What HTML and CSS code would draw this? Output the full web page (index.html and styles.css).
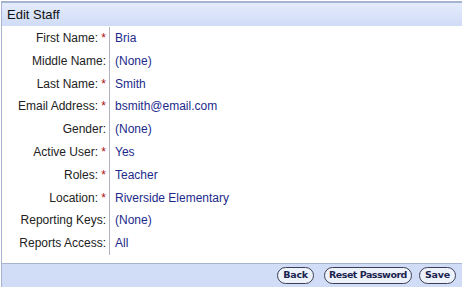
FILE: index.html
```html
<!DOCTYPE html>
<html lang="en">
  <head>
    <meta charset="UTF-8" />
    <title>Edit Staff</title>
    <link rel="stylesheet" href="styles.css">
  </head>
  <body>
    <div class="panel">
      <div class="panel-title">Edit Staff</div>

      <div class="form-body">
        <div class="labels">
          <div class="label">First Name: <span class="req">*</span></div>
          <div class="label">Middle Name:</div>
          <div class="label">Last Name: <span class="req">*</span></div>
          <div class="label">Email Address: <span class="req">*</span></div>
          <div class="label">Gender:</div>
          <div class="label">Active User: <span class="req">*</span></div>
          <div class="label">Roles: <span class="req">*</span></div>
          <div class="label">Location: <span class="req">*</span></div>
          <div class="label">Reporting Keys:</div>
          <div class="label">Reports Access:</div>
        </div>
        <div class="values">
          <div class="value">Bria</div>
          <div class="value">(None)</div>
          <div class="value">Smith</div>
          <div class="value">bsmith@email.com</div>
          <div class="value">(None)</div>
          <div class="value">Yes</div>
          <div class="value">Teacher</div>
          <div class="value">Riverside Elementary</div>
          <div class="value">(None)</div>
          <div class="value">All</div>
        </div>
      </div>

      <div class="panel-footer">
        <button class="btn">Back</button>
        <button class="btn btn-wide">Reset Password</button>
        <button class="btn">Save</button>
      </div>
    </div>
  </body>
</html>
```

FILE: styles.css
```css
body {
  margin: 0;
  font-family: "Liberation Sans", Arial, sans-serif;
  font-size: 12px;
  background: #fff;
  overflow: hidden;
}
.panel {
  margin: 1px 0 0 1px;
  border-top: 2px solid #a7b4cf;
  border-left: 1px solid #a7b4cf;
  height: 284px;
  display: flex;
  flex-direction: column;
}
.panel-title {
  height: 24px;
  line-height: 23px;
  padding-left: 5px;
  font-size: 13px;
  color: #111;
  background: linear-gradient(#e4ecfc, #d0dcf6);
}
.form-body {
  display: flex;
  flex: 1;
  padding-top: 1px;
}
.labels {
  width: 107px;
  border-right: 1px solid #aeb3bd;
  margin-bottom: 8px;
}
.label,
.value {
  height: 22.8px;
  line-height: 22.8px;
  white-space: nowrap;
}
.label {
  text-align: right;
  padding-right: 3px;
  color: #222;
}
.req {
  color: #a11;
}
.values {
  padding-left: 5px;
}
.value {
  color: #1c2a8c;
}
.panel-footer {
  height: 24px;
  border-top: 1px solid #a7b4cf;
  background: #d1ddf6;
  display: flex;
  justify-content: flex-end;
  align-items: center;
  padding-right: 6px;
}
.btn {
  font-family: "DejaVu Sans", Verdana, sans-serif;
  font-weight: bold;
  font-size: 9.5px;
  letter-spacing: -0.2px;
  color: #1a2450;
  background: #eef2fa;
  border: 1px solid #3a3f55;
  border-radius: 9px;
  height: 17px;
  padding: 0 5px;
  line-height: 14px;
}
.btn-wide {
  padding: 0 4px;
  letter-spacing: -0.5px;
  margin: 0 7px 0 10px;
}
```
